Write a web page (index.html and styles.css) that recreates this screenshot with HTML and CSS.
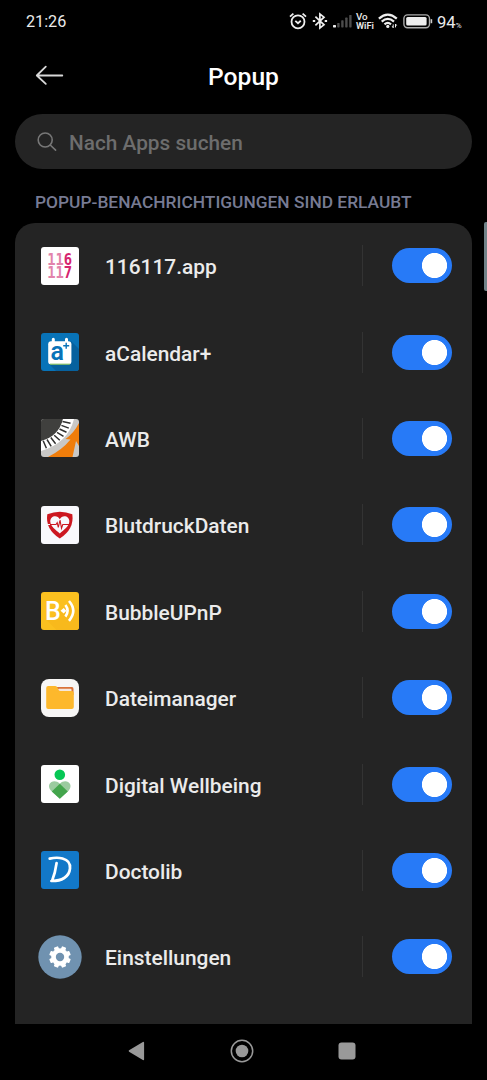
FILE: index.html
```html
<!DOCTYPE html>
<html lang="de">

<head>
  <meta charset="UTF-8" />
  <title>Popup</title>
  <link rel="stylesheet" href="styles.css">
</head>

<body>
  <div class="phone">
    <div class="status">
      <span class="time">21:26</span>
      <svg class="alarm" width="18" height="18" viewBox="0 0 18 18" fill="none" stroke="#eee" stroke-width="1.8">
        <circle cx="9" cy="9.8" r="6.5" />
        <path d="M1 4.6L4.4 1.6M17 4.6L13.6 1.6M6.3 8.8L9 11.2L11.8 8.8" />
      </svg>
      <svg class="bluetooth" width="16" height="18" viewBox="0 0 16 18" fill="none" stroke="#eee" stroke-width="1.7">
        <path d="M3.4 4.7L12 12.8L7.9 16V2L12 5.2L3.4 13.3" />
        <path d="M.8 9h2.4M12.7 9h2.4" stroke-width="2.2" />
      </svg>
      <svg class="signal" width="20" height="14" viewBox="0 0 20 14" fill="#4c4c4c">
        <rect x="0" y="11" width="3" height="2.4" rx=".6" fill="#eee" />
        <rect x="4.2" y="9" width="2.4" height="4.4" rx=".6" />
        <rect x="8.2" y="6.3" width="2.4" height="7.1" rx=".6" />
        <rect x="12.2" y="3.6" width="2.4" height="9.8" rx=".6" />
        <rect x="16.2" y="1" width="2.4" height="12.4" rx=".6" />
      </svg>
      <span class="vowifi"><span class="vo">Vo</span><br>WiFi</span>
      <svg class="wifi" width="20" height="16" viewBox="0 0 20 16" fill="none" stroke="#eee" stroke-width="2.2">
        <path d="M.9 5.6Q9.8-2.5 18.8 5.6M3.7 8.6Q9.8 3 16 8.6M6.5 11.4Q9.8 8.5 13 11.4" />
        <circle cx="9.8" cy="13.4" r="1.6" fill="#eee" stroke="none" />
        <path d="M15.2 11.4v3.4M17.5 11v3.4M14.2 13.2l1 1.6M17.5 11l1.2 1.6" stroke-width="1" />
      </svg>
      <svg class="battery" width="30" height="15" viewBox="0 0 30 15">
        <rect x=".9" y=".9" width="25.6" height="12.8" rx="3.6" fill="none" stroke="#aaa" stroke-width="1.4" />
        <rect x="3.2" y="3" width="20.4" height="8.6" rx="1.5" fill="#eee" />
        <path d="M28.4 5.2v4" stroke="#ccc" stroke-width="1.6" />
      </svg>
      <span class="percent">94<small>%</small></span>
    </div>

    <div class="header">
      <svg class="back" width="30" height="22" viewBox="0 0 30 22" fill="none" stroke="#d8d8d8" stroke-width="1.8" stroke-linecap="round" stroke-linejoin="round">
        <path d="M27.3 10.5H1.8M10.8 1.7L1.8 10.5L10.8 18.9" />
      </svg>
      <h1>Popup</h1>
    </div>

    <div class="search">
      <svg width="20" height="20" viewBox="0 0 20 20" fill="none" stroke="#777" stroke-width="1.6" stroke-linecap="round">
        <circle cx="8.2" cy="8" r="7" />
        <path d="M13.2 13L18.6 18.2" />
      </svg>
      <span>Nach Apps suchen</span>
    </div>

    <h2>POPUP-BENACHRICHTIGUNGEN SIND ERLAUBT</h2>

    <ul class="list">
      <li>
        <div class="icon">
          <svg width="38" height="38" viewBox="0 0 38 38">
            <rect width="38" height="38" rx="3" fill="#fff" />
            <g class="num" fill="#e283ab">
              <text x="6.2" y="18" textLength="25" lengthAdjust="spacingAndGlyphs">11<tspan fill="#d6246e">6</tspan></text>
              <text x="6.2" y="31.3" textLength="25" lengthAdjust="spacingAndGlyphs">11<tspan fill="#d6246e">7</tspan></text>
            </g>
          </svg>
        </div>
        <span class="name">116117.app</span>
        <i class="switch"></i>
      </li>
      <li>
        <div class="icon">
          <svg width="38" height="38" viewBox="0 0 38 38">
            <rect width="38" height="38" rx="3" fill="#0873b8" />
            <path d="M30 8L38 16V35Q38 38 35 38H15L8 31z" fill="#07619e" />
            <rect x="7.2" y="8.2" width="23.2" height="23.3" rx="3" fill="#fff" />
            <path d="M12.3 6.3v5M25.5 6.3v5" stroke="#fff" stroke-width="3" stroke-linecap="round" />
            <path d="M9 31.2h20" stroke="#71b54a" stroke-width="1" />
            <text class="cal-a" x="9.6" y="27.4" fill="#0873b8">a</text>
            <path d="M22.2 12.8h6M25.2 9.8v6" stroke="#0873b8" stroke-width="1.4" />
          </svg>
        </div>
        <span class="name">aCalendar+</span>
        <i class="switch"></i>
      </li>
      <li>
        <div class="icon">
          <svg class="clip" width="38" height="38" viewBox="0 0 38 38">
            <rect width="38" height="38" fill="#c9c8c6" />
            <path d="M0 0H22Q18 18 0 23z" fill="#40403e" />
            <path d="M33 0Q27 24 0 32V22Q18 17 22 0z" fill="#fff" />
            <path d="M21.5 2.5L29.5 4.3M20.4 6.4L27.8 9.1M18.5 10L25.5 13.3M16 13.4L22.5 17.3M13.2 16.2L18.8 21.3M9.8 18.5L14.6 24.7M6 20.5L10.2 27.3M2.2 21.8L5.4 29.2" stroke="#30302f" stroke-width="1.5" />
            <path d="M38 4V27L35 22L31.5 38H7Q21 31 29.5 20.5L24.5 20Q33 14 38 4z" fill="#ef7d0b" />
          </svg>
        </div>
        <span class="name">AWB</span>
        <i class="switch"></i>
      </li>
      <li>
        <div class="icon">
          <svg width="38" height="38" viewBox="0 0 38 38">
            <rect width="38" height="38" rx="3" fill="#f8f8fc" />
            <path d="M6.3 8.2Q19 3.2 31.3 8.2Q33.5 23 18.8 32.5Q4 23 6.3 8.2z" fill="#cc1720" />
            <path d="M18.8 13.2C16.5 8.2 8.8 9.6 9.3 15.8C9.6 20.3 14.5 24 18.8 27.4C23 24 28 20.3 28.3 15.8C28.8 9.6 21 8.2 18.8 13.2z" fill="#f8f8fc" />
            <path d="M4.5 18.5H9" stroke="#f8f8fc" stroke-width="1" />
            <path d="M9 18.5H15L16.2 16.6L17.3 21.5L19 14L20.5 22.3L21.8 18.5H29" fill="none" stroke="#cc1720" stroke-width="1.1" />
          </svg>
        </div>
        <span class="name">BlutdruckDaten</span>
        <i class="switch"></i>
      </li>
      <li>
        <div class="icon">
          <svg class="clip" width="38" height="38" viewBox="0 0 38 38">
            <rect width="38" height="38" fill="#fbc01f" />
            <path d="M6 28.5L15.5 38H38V18L30 12z" fill="#f8b91c" />
            <text class="bubble-b" x="4" y="28.4" fill="#fff">B</text>
            <path d="M22.7 16L25.4 18.8L22.7 21.6L19.5 18.8z" fill="#fff" />
            <path d="M24.4 13Q28.8 18.8 24.4 24.6M28 9Q36.6 18.8 28 28.8" fill="none" stroke="#fff" stroke-width="2.6" />
          </svg>
        </div>
        <span class="name">BubbleUPnP</span>
        <i class="switch"></i>
      </li>
      <li>
        <div class="icon">
          <svg width="38" height="38" viewBox="0 0 38 38">
            <rect width="38" height="38" rx="8" fill="#f7f6f5" />
            <path d="M14 8H31Q32.5 8 32.5 10V16H14z" fill="#d9733a" />
            <rect x="17" y="9.8" width="13.5" height="5" rx="1" fill="#f5e7dc" />
            <path d="M7.2 7H14.3Q15.8 7 16.6 8.8L17.6 11Q18 12 19.5 12H30.8Q32.8 12 32.8 14V28Q32.8 30 30.8 30H7.2Q5.2 30 5.2 28V9Q5.2 7 7.2 7z" fill="#fdb82c" />
          </svg>
        </div>
        <span class="name">Dateimanager</span>
        <i class="switch"></i>
      </li>
      <li>
        <div class="icon">
          <svg width="38" height="38" viewBox="0 0 38 38">
            <rect width="38" height="38" rx="3" fill="#fff" />
            <circle cx="18.8" cy="9.7" r="5.3" fill="#06c755" />
            <path d="M18.8 33.8L9.8 25.4C4.3 19 12.8 12.7 18.8 18.8C24.8 12.7 33.3 19 27.8 25.4z" fill="#9bcb9f" />
            <path d="M18.8 18.8L26.8 26.4L18.8 33.8L10.8 26.4z" fill="#43a54c" />
          </svg>
        </div>
        <span class="name">Digital Wellbeing</span>
        <i class="switch"></i>
      </li>
      <li>
        <div class="icon">
          <svg width="38" height="38" viewBox="0 0 38 38">
            <rect width="38" height="38" rx="3" fill="#1278c8" />
            <path d="M8.7 7.6C13 6.6 18 6.5 21.5 7.5C27 9 29.5 12.5 29 17.5C28.2 26 20.5 30.2 10.4 30M15.6 12Q14.2 22 11.2 29.6" fill="none" stroke="#fff" stroke-width="2.7" stroke-linecap="round" />
          </svg>
        </div>
        <span class="name">Doctolib</span>
        <i class="switch"></i>
      </li>
      <li>
        <div class="icon">
          <svg width="44" height="44" viewBox="-22 -22 44 44">
            <circle r="21.7" fill="#7092b0" />
            <g fill="#fff">
              <circle r="8.8" />
              <rect id="tooth" x="-2.3" y="-10.8" width="4.6" height="21.6" rx=".8" transform="rotate(22.5)" />
              <use href="#tooth" transform="rotate(45)" />
              <use href="#tooth" transform="rotate(90)" />
              <use href="#tooth" transform="rotate(135)" />
            </g>
            <circle r="4.2" fill="#7092b0" />
          </svg>
        </div>
        <span class="name">Einstellungen</span>
        <i class="switch"></i>
      </li>
    </ul>

    <div class="nav">
      <svg width="18" height="22" viewBox="0 0 18 22">
        <path d="M1.5 11L15.3 2.6V19.4z" fill="#999" stroke="#999" stroke-width="1.6" stroke-linejoin="round" />
      </svg>
      <svg width="24" height="24" viewBox="0 0 24 24">
        <circle cx="12" cy="12" r="10.7" fill="none" stroke="#999" stroke-width="1.5" />
        <circle cx="12" cy="12" r="6.3" fill="#999" />
      </svg>
      <svg width="18" height="18" viewBox="0 0 18 18">
        <rect x=".5" y=".5" width="17" height="17" rx="3" fill="#999" />
      </svg>
    </div>
    <div class="scrollbar"></div>
  </div>
</body>

</html>
```
FILE: styles.css
```css
* {
  padding: 0;
  margin: 0;
  box-sizing: border-box;
  list-style: none;
}

body {
  background: #000;
  font-family: Roboto, "Liberation Sans", sans-serif;
  color: #ebebeb;
}

.phone {
  position: relative;
  width: 487px;
  height: 1080px;
  overflow: hidden;
  display: flex;
  flex-direction: column;
  background: #000;
}

svg {
  display: block;
  flex-shrink: 0;
}

/* status bar */
.status {
  height: 42px;
  padding-left: 26px;
  display: flex;
  align-items: center;
  white-space: nowrap;
}

.time {
  width: 263px;
  font-size: 16.2px;
  font-weight: 450;
  padding-top: 1px;
}

.bluetooth {
  margin-left: 5px;
}

.signal {
  margin-left: 5px;
}

.vowifi {
  width: 19px;
  margin-left: 3px;
  font-size: 9.2px;
  line-height: 9px;
  font-weight: 600;
}

.vo {
  font-size: 9.8px;
  font-weight: 500;
}

.wifi {
  margin-left: 3px;
}

.battery {
  margin-left: 5px;
}

.percent {
  margin-left: 4px;
  padding-top: 2px;
  font-size: 16.6px;
  font-weight: 450;
}

.percent small {
  font-size: 8px;
}

/* title */
.header {
  height: 72px;
  padding: 0 35px 4px;
  display: grid;
  grid-template-columns: 30px 1fr 30px;
  align-items: center;
}

h1 {
  font-size: 24.6px;
  line-height: 28px;
  font-weight: 500;
  text-align: center;
  color: #fff;
  padding-top: 2px;
}

.search {
  height: 55px;
  margin: 0 15px;
  padding-left: 22px;
  border-radius: 28px;
  background: #242424;
  display: flex;
  align-items: center;
  gap: 12px;
  font-size: 20.8px;
  font-weight: 500;
  color: #6d6d6d;
}

.search span {
  padding-top: 2px;
}

h2 {
  height: 54px;
  padding: 21px 0 0 35px;
  font-size: 17.35px;
  line-height: 24px;
  font-weight: 550;
  color: #777b93;
  white-space: nowrap;
}

/* app list */
.list {
  height: 801px;
  margin: 0 15px;
  border-radius: 20px 20px 0 0;
  background: #242424;
}

.list li {
  height: 86.4px;
  padding: 0 20px 1px 22px;
  display: grid;
  grid-template-columns: 45px 1fr 90px;
  align-items: center;
}

.icon {
  display: flex;
  justify-content: center;
}

.clip {
  border-radius: 3px;
}

.num {
  font: 700 16px "DejaVu Sans Mono", monospace;
}

.cal-a {
  font: 600 25px Roboto, sans-serif;
}

.bubble-b {
  font: 500 25px Roboto, sans-serif;
}

.name {
  padding: 3px 0 0 23px;
  font-size: 20.9px;
  font-weight: 500;
}

.switch {
  height: 41px;
  border-left: 1px solid #333;
  display: flex;
  align-items: center;
  justify-content: flex-end;
}

.switch::before {
  content: "";
  width: 60px;
  height: 35px;
  border-radius: 18px;
  background: radial-gradient(circle at 42.5px 17.5px, #fff 12.2px, #277af7 12.9px);
}

/* navigation buttons */
.nav {
  height: 56px;
  padding: 0 131px 2px 128px;
  display: flex;
  align-items: center;
  justify-content: space-between;
}

.scrollbar {
  position: absolute;
  right: 0;
  top: 222px;
  width: 3px;
  height: 69px;
  border-radius: 2px 0 0 2px;
  background: #718389;
}
```
